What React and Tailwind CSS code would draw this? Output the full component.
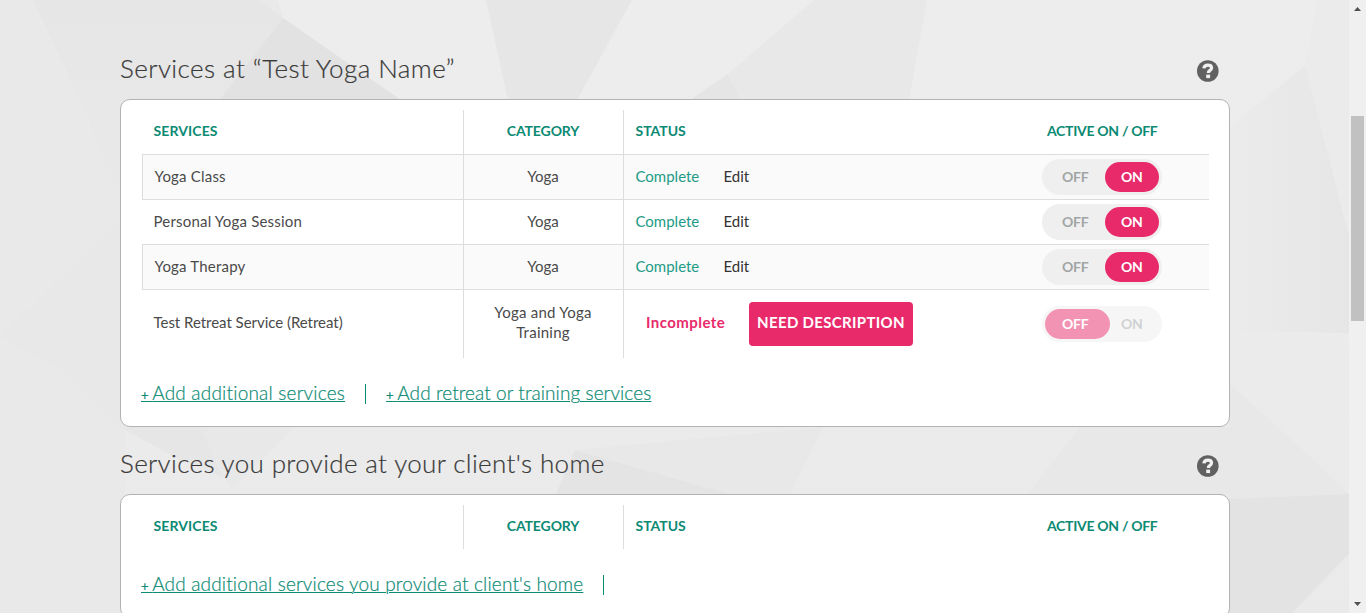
import React from 'react';

const COLS = 'grid grid-cols-[321px_160px_386px_200px]';

function Backdrop() {
  return (
    <svg className="absolute inset-0" width="1349" height="613" viewBox="0 0 1349 613" aria-hidden="true">
      <defs>
        <linearGradient id="base" x1="0" y1="0" x2="0" y2="1">
          <stop offset="0" stopColor="#ededed" />
          <stop offset="1" stopColor="#eaeaea" />
        </linearGradient>
        <linearGradient id="fade" x1="0" y1="0" x2="1" y2="0">
          <stop offset="0" stopColor="#ebebeb" />
          <stop offset="1" stopColor="#e6e6e6" />
        </linearGradient>
        <linearGradient id="left" x1="0" y1="0" x2="0" y2="1">
          <stop offset="0" stopColor="#e6e6e6" />
          <stop offset="1" stopColor="#e9e9e9" />
        </linearGradient>
      </defs>
      <rect width="1349" height="613" fill="url(#base)" />
      <polygon points="0,0 125,0 125,613 0,613" fill="#e9e9e9" />
      <polygon points="33,0 260,0 283,18 219,100 125,100 125,216 85,110" fill="url(#left)" />
      <polygon points="0,337 125,216 125,430 60,370" fill="#e8e8e8" />
      <polygon points="283,18 219,100 401,100" fill="#e2e2e2" />
      <polygon points="260,0 278,0 283,18" fill="#e9e9e9" />
      <polygon points="486,0 632,0 577,100 508,100" fill="#e6e6e6" />
      <polygon points="814,0 927,0 909,100 740,100 728,74" fill="#e8e8e8" />
      <polygon points="728,74 740,100 690,100" fill="#e5e5e5" />
      <polygon points="1317,0 1349,0 1349,236 1305,66" fill="#ebebeb" />
      <polygon points="1305,66 1349,236 1349,333 1229,331 1229,127" fill="url(#fade)" />
      <polygon points="1229,383 1317,463 1349,494 1229,499" fill="#e8e8e8" />
      <polygon points="1229,499 1349,494 1349,554 1292,613 1229,613" fill="#e3e3e3" />
      <polygon points="120,427 200,427 224,478 180,460" fill="#e6e6e6" />
      <polygon points="200,427 294,427 231,490" fill="#e8e8e8" />
      <polygon points="575,450 730,494 556,494" fill="#e4e4e4" />
      <polygon points="575,450 823,427 790,494 730,494" fill="#e8e8e8" />
      <polygon points="1080,427 1229,427 1229,494 1028,494" fill="#e8e8e8" />
    </svg>
  );
}

function HelpIcon() {
  return (
    <svg className="h-[22px] w-[22px]" viewBox="0 0 22 22" role="img" aria-label="Help">
      <circle cx="10.8" cy="11" r="10.8" fill="#616161" />
      <path d="M6.9 8.4C7.1 6 8.6 5.2 10.9 5.2c2.2 0 3.6 1 3.6 2.8 0 1.4-.8 2-1.8 2.7-.9.6-1.3 1-1.3 2.3" fill="none" stroke="#f0f0f0" strokeWidth="3.3" />
      <rect x="9.2" y="14.6" width="3.9" height="3.5" fill="#f0f0f0" />
    </svg>
  );
}

function Toggle({ on, disabled }) {
  return (
    <div className={`flex h-9 w-[120px] items-start rounded-full bg-[#efefef] pt-[2.5px] pl-[3px] text-sm font-bold ${disabled ? 'opacity-50' : ''}`}>
      <span className={`flex h-[30px] items-center rounded-full pt-px pl-[17px] tracking-[-0.3px] ${on ? 'w-[60px] text-[#a1a5a5]' : 'w-[65px] bg-[#e82a6b] text-white'}`}>OFF</span>
      <span className={`flex h-[30px] items-center rounded-full pt-px tracking-[-0.3px] ${on ? 'w-[54px] bg-[#e82a6b] pl-4 text-white' : 'pl-[11px] text-[#a1a5a5]'}`}>ON</span>
    </div>
  );
}

function HeaderRow() {
  return (
    <div className={`${COLS} h-11 text-sm font-bold text-[#0b8a74]`}>
      <div className="flex items-center pb-0.5 pl-[11.5px] tracking-[0.1px]">SERVICES</div>
      <div className="flex items-center justify-center border-l border-[#dddddd] pr-px pb-0.5 tracking-[-0.1px]">CATEGORY</div>
      <div className="flex items-center border-l border-[#dddddd] pb-0.5 pl-[11.5px]">STATUS</div>
      <div className="flex items-center pb-0.5 pl-[38px] tracking-[-0.3px]">ACTIVE ON / OFF</div>
    </div>
  );
}

function ServiceRow({ name, category, shaded, incomplete }) {
  return (
    <div className={`${COLS} border-t border-[#dddddd] text-[15px] leading-5 text-[#4a4a4a] ${incomplete ? 'h-[69px]' : 'h-[45px]'} ${shaded ? 'bg-[#fafafa]' : ''}`}>
      <div className={`flex items-center pl-[11.5px] ${shaded ? 'border-l border-[#dddddd]' : ''} ${incomplete ? 'pb-1 tracking-[-0.03px]' : 'pb-[3px] tracking-[0.2px]'}`}>{name}</div>
      <div className={`flex items-center justify-center border-l border-[#dddddd] pr-[21px] pl-5 text-center ${incomplete ? 'pb-1 tracking-[0.25px]' : 'pb-[3px]'}`}>{category}</div>
      {incomplete ? (
        <div className="flex items-center border-l border-[#dddddd] pl-[22px]">
          <span className="w-[103px] pb-1 font-bold tracking-[0.45px] text-[#e82a6b]">Incomplete</span>
          <button className="h-11 w-[164px] rounded-[4px] bg-[#e82a6b] pb-1 font-bold tracking-[0.33px] whitespace-nowrap text-white">NEED DESCRIPTION</button>
        </div>
      ) : (
        <div className="flex items-center border-l border-[#dddddd] pb-[3px] pl-[11.5px]">
          <span className="w-[88px] text-[#229a86]">Complete</span>
          <span className="text-[#333333]">Edit</span>
        </div>
      )}
      <div className="flex items-center pl-[33px]">
        <Toggle on={!incomplete} disabled={incomplete} />
      </div>
    </div>
  );
}

function AddLink({ children }) {
  return (
    <a className="text-[19px] leading-6 font-light whitespace-nowrap text-[#0b8a74] underline decoration-1 underline-offset-1 [-webkit-text-stroke:0.2px_#0b8a74]">
      <span className="text-[13px] font-normal tracking-[-1.5px]">+</span> {children}
    </a>
  );
}

function Divider() {
  return <span className="mx-5 h-5 w-px bg-[#0b8a74]" />;
}

function Section({ title, rows, links }) {
  return (
    <section>
      <div className="flex h-[60px] items-start justify-between pr-[11px]">
        {title}
        <div className="pt-[21px]"><HelpIcon /></div>
      </div>
      <div className="rounded-[10px] border border-[#b3b3b3] bg-white px-5 pt-2.5">
        <div className="pl-px">
          <HeaderRow />
          {rows}
        </div>
        <div className="flex h-[68px] items-center pt-1">{links}</div>
      </div>
    </section>
  );
}

const headingClass = 'pt-[9px] text-[26px] leading-10 font-light text-[#3a3a3a] [-webkit-text-stroke:0.2px_#3a3a3a]';

export default function App() {
  return (
    <div className="relative flex h-[613px] w-[1366px] overflow-hidden font-['Lato',sans-serif]">
      <Backdrop />
      <main className="relative h-[613px] w-[1349px] overflow-hidden pt-[39px] pl-[120px]">
        <div className="flex w-[1110px] flex-col gap-[7px]">
          <Section
            title={<h2 className={`${headingClass} tracking-[0.45px]`}>Services at “Test Yoga Name”</h2>}
            rows={
              <>
                <ServiceRow name="Yoga Class" category="Yoga" shaded />
                <ServiceRow name="Personal Yoga Session" category="Yoga" />
                <ServiceRow name="Yoga Therapy" category="Yoga" shaded />
                <ServiceRow name="Test Retreat Service (Retreat)" category="Yoga and Yoga Training" incomplete />
              </>
            }
            links={
              <>
                <AddLink><span className="tracking-[0.2px]">Add additional services</span></AddLink>
                <Divider />
                <AddLink><span className="tracking-[0.08px]">Add retreat or training services</span></AddLink>
              </>
            }
          />
          <Section
            title={<h2 className={`${headingClass} tracking-[0.36px]`}>Services you provide at your client's home</h2>}
            links={
              <>
                <AddLink><span className="tracking-[0.16px]">Add additional services you provide at client's home</span></AddLink>
                <Divider />
              </>
            }
          />
        </div>
      </main>
      <div className="relative flex h-[613px] w-[17px] flex-col items-center bg-[#f0f0f0]">
        <svg className="mt-[7px] h-1 w-[7px]" viewBox="0 0 7 4"><path d="M3.5 0 7 4H0z" fill="#505050" /></svg>
        <div className="mt-[105px] h-[205px] w-[13px] bg-[#c1c1c1]" />
        <svg className="mt-auto mb-[7px] h-1 w-[7px]" viewBox="0 0 7 4"><path d="M0 0h7L3.5 4z" fill="#505050" /></svg>
      </div>
    </div>
  );
}
